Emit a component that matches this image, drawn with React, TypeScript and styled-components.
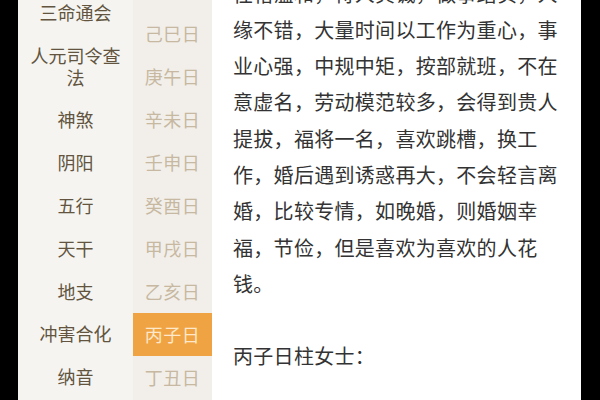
import styled, { createGlobalStyle } from "styled-components";

const GlobalStyle = createGlobalStyle`
  html, body {
    margin: 0;
    padding: 0;
    background: #000;
  }
  body {
    font-family: "Noto Sans CJK SC", "Noto Sans", sans-serif;
  }
`;

const Frame = styled.div`
  display: flex;
  width: 600px;
  height: 400px;
  overflow: hidden;
  background: #000;
  padding: 0 19px 0 18px;
  box-sizing: border-box;
`;

const Screen = styled.div`
  flex: 1;
  display: flex;
  height: 100%;
  overflow: hidden;
`;

const Menu = styled.nav`
  width: 115px;
  flex-shrink: 0;
  background: #f5f4f1;
  overflow: hidden;
`;

const MenuList = styled.ul`
  list-style: none;
  margin: -9.5px 0 0;
  padding: 0;
`;

const MenuItem = styled.li`
  padding: 10.4px 9px;
  line-height: 22px;
  font-size: 18px;
  color: #62543e;
  text-align: center;
`;

const Days = styled.div`
  width: 79px;
  flex-shrink: 0;
  background: #f2efea;
  overflow: hidden;
`;

const DayList = styled.ul`
  list-style: none;
  margin: -31.5px 0 0;
  padding: 0;
`;

const DayItem = styled.li<{ $active?: boolean }>`
  height: 43px;
  display: flex;
  align-items: center;
  justify-content: center;
  font-size: 18px;
  letter-spacing: 0.5px;
  color: ${(p) => (p.$active ? "#fde8ca" : "#c7b8a1")};
  background: ${(p) => (p.$active ? "#f0a343" : "transparent")};
`;

const Content = styled.article`
  flex: 1;
  background: #fff;
  overflow: hidden;
  padding-left: 21px;
`;

const Body = styled.div`
  width: 336px;
  margin-top: -24.5px;
  font-size: 20px;
  letter-spacing: 0.3px;
  line-height: 36.3px;
  color: #333;
`;

const Para = styled.p<{ $gap?: boolean }>`
  margin: 0 0 ${(p) => (p.$gap ? "36.3px" : "0")};
`;

const menu = [
  "三命通会",
  "人元司令查法",
  "神煞",
  "阴阳",
  "五行",
  "天干",
  "地支",
  "冲害合化",
  "纳音",
];

const days = [
  "戊辰日",
  "己巳日",
  "庚午日",
  "辛未日",
  "壬申日",
  "癸酉日",
  "甲戌日",
  "乙亥日",
  "丙子日",
  "丁丑日",
];

const App = () => {
  return (
    <>
      <GlobalStyle />
      <Frame>
        <Screen>
          <Menu>
            <MenuList>
              {menu.map((m) => (
                <MenuItem key={m}>{m}</MenuItem>
              ))}
            </MenuList>
          </Menu>
          <Days>
            <DayList>
              {days.map((d) => (
                <DayItem key={d} $active={d === "丙子日"}>
                  {d}
                </DayItem>
              ))}
            </DayList>
          </Days>
          <Content>
            <Body>
              <Para $gap>
                性格温和，待人真诚，做事踏实，人缘不错，大量时间以工作为重心，事业心强，中规中矩，按部就班，不在意虚名，劳动模范较多，会得到贵人提拔，福将一名，喜欢跳槽，换工作，婚后遇到诱惑再大，不会轻言离婚，比较专情，如晚婚，则婚姻幸福，节俭，但是喜欢为喜欢的人花钱。
              </Para>
              <Para>丙子日柱女士：</Para>
            </Body>
          </Content>
        </Screen>
      </Frame>
    </>
  );
};

export default App;
